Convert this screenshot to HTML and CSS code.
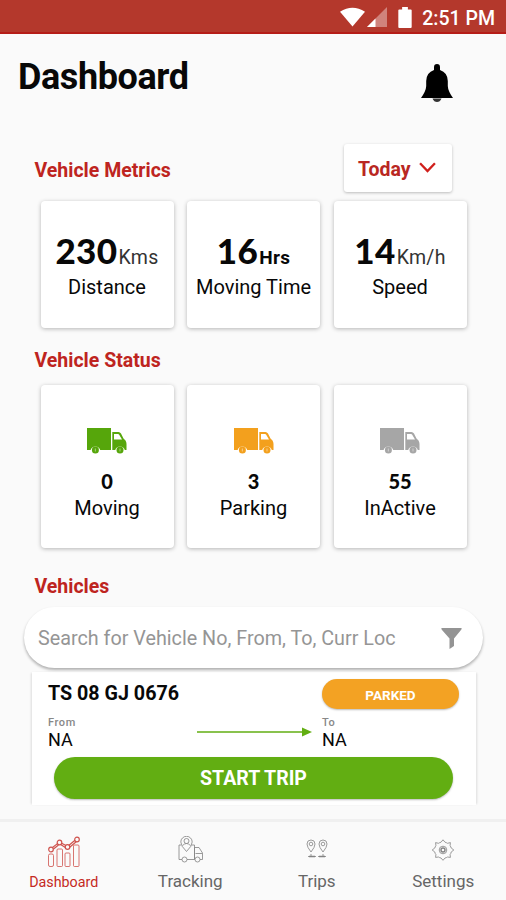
FILE: index.html
```html
<!DOCTYPE html>
<html lang="en">
<head>
<meta charset="utf-8">
<title>Dashboard</title>
<link rel="stylesheet" href="styles.css">
</head>
<body>
<svg class="defs" aria-hidden="true">
  <symbol id="truck" viewBox="0 0 40 26">
    <path fill="currentColor" d="M0 0H24V22H13.200A5 5 0 0 0 3.600 22H0Z"/>
    <path fill="currentColor" fill-rule="evenodd" d="M25.300 4H31.500Q33 4 34 5.500L36.500 10.500L38.500 12.500Q39.500 14 39.500 16V22H37.800A5 5 0 0 0 28.200 22H25.300ZM27 6V11.500H35L32.200 6.700Q31.800 6 31 6Z"/>
    <circle cx="8.400" cy="22" r="3.500" fill="currentColor"/><circle cx="33" cy="22" r="3.500" fill="currentColor"/>
    <path stroke="#fff" stroke-opacity=".4" stroke-width="1.200" d="M8.400 20.500V23.500M33 20.500V23.500"/>
  </symbol>
</svg>
<div class="statusbar">
  <svg class="wifi" viewBox="0 0 26 20"><path fill="#fff" d="M0 4.500Q13-4 26 4.500L13 20Z"/></svg>
  <svg class="signal" viewBox="0 0 20 20"><path fill="#fff" fill-opacity=".38" d="M20 0V20H0Z"/><path fill="#fff" d="M8.500 11.500V20H0Z"/></svg>
  <svg class="battery" viewBox="0 0 14 22"><path fill="#fff" d="M4 0H10V2.500H13Q14 2.500 14 3.500V21Q14 22 13 22H1Q0 22 0 21V3.500Q0 2.500 1 2.500H4Z"/></svg>
  <span class="clock">2:51 PM</span>
</div>
<header class="header">
  <h1>Dashboard</h1>
  <svg class="bell" viewBox="0 0 32 38"><path d="M13 3.200Q13 0 16 0T19 3.200V6Q26.600 8.500 26.800 17V22Q27 27 32 34H0Q5 27 5.200 22V17Q5.400 8.500 13 6Z"/><path fill="#333" d="M11.500 34.500H20.500Q19 38 16 38T11.500 34.500Z"/></svg>
</header>
<main>
  <section class="metrics">
    <div class="section-head">
      <h2>Vehicle Metrics</h2>
      <button class="period"><span>Today</span><svg viewBox="0 0 16 10"><path fill="none" stroke="#d0201c" stroke-width="2.200" d="M1 1L8 8.300L15 1"/></svg></button>
    </div>
    <div class="cards">
      <div class="card metric"><div class="value"><b>230</b><span>Kms</span></div><div class="label">Distance</div></div>
      <div class="card metric"><div class="value"><b>16</b><span class="strong">Hrs</span></div><div class="label">Moving Time</div></div>
      <div class="card metric"><div class="value"><b>14</b><span>Km/h</span></div><div class="label">Speed</div></div>
    </div>
  </section>
  <section class="status">
    <h2>Vehicle Status</h2>
    <div class="cards">
      <div class="card state"><svg class="truck green"><use href="#truck"/></svg><b>0</b><div class="label">Moving</div></div>
      <div class="card state"><svg class="truck orange"><use href="#truck"/></svg><b>3</b><div class="label">Parking</div></div>
      <div class="card state"><svg class="truck gray"><use href="#truck"/></svg><b>55</b><div class="label">InActive</div></div>
    </div>
  </section>
  <section class="vehicles">
    <h2>Vehicles</h2>
    <div class="search"><span>Search for Vehicle No, From, To, Curr Loc</span><svg viewBox="0 0 21 21"><path fill="#949494" d="M.500 0H20.500Q21 1 20 2L13 10.500V18L8.500 21V10.500L1 2Q0 1 .500 0Z"/></svg></div>
    <article class="vehicle">
      <div class="vehicle-top"><h3>TS 08 GJ 0676</h3><span class="badge">PARKED</span></div>
      <div class="route">
        <div class="place from"><small>From</small><span>NA</span></div>
        <svg class="arrow" viewBox="0 0 115 10"><path stroke="#62ae12" stroke-width="1.700" d="M0 5H108"/><path fill="#62ae12" d="M105 .500L115 5L105 9.500Z"/></svg>
        <div class="place"><small>To</small><span>NA</span></div>
      </div>
      <button class="start">START TRIP</button>
    </article>
  </section>
</main>
<nav class="nav">
  <a class="active"><svg viewBox="0 0 34 32" fill="none" stroke="currentColor"><rect x="1.500" y="18" width="5" height="12.500" rx="1.500"/><rect x="10" y="13" width="5.500" height="17.500" rx="1"/><rect x="18" y="17" width="5" height="13.500" rx="1"/><rect x="26.500" y="9" width="5.500" height="21.500" rx="1"/><g stroke-width="1.200"><circle cx="4" cy="13.500" r="2.300"/><circle cx="12.500" cy="6.500" r="2.300"/><circle cx="20.500" cy="11" r="2.300"/><circle cx="30" cy="3.500" r="2.300"/><path d="M5.500 11.500L10.500 7.600M6.500 13L11.500 9M14.700 7.200L18.500 9.300M14 8.700L18.400 11.500M22 9.300L28 4.300M22.700 11.200L29.200 5.800"/></g></svg><span>Dashboard</span></a>
  <a><svg viewBox="0 0 34 32" fill="none" stroke="currentColor"><path d="M8 9H6V23.500H9M14 23.500H21.500V11.500H26L29.500 17V23.500H27M21.500 9V23.500M22.500 17.500H29M18.500 9H21.500"/><circle cx="11.500" cy="23.500" r="2.500"/><circle cx="24.500" cy="23.500" r="2.500"/><path d="M13.500 15.500Q7.800 10 7.800 6A5.700 5.700 0 0 1 19.200 6Q19.200 10 13.500 15.500Z"/><circle cx="13.500" cy="5" r="2.500"/><path d="M9.500 9.500Q13.500 5.500 17.500 9.500"/></svg><span>Tracking</span></a>
  <a><svg viewBox="0 0 34 32" fill="none" stroke="currentColor"><path d="M11 16Q7 11 7 8A4 4 0 0 1 15 8Q15 11 11 16ZM23 16Q19 11 19 8A4 4 0 0 1 27 8Q27 11 23 16Z"/><circle cx="11" cy="8" r="1.800"/><circle cx="23" cy="8" r="1.800"/><path stroke-width="1.500" d="M9 20.500H15M19 20.500H25"/><path d="M11 18V21M23 18V21M8 20.500H26" stroke-dasharray="3 2"/></svg><span>Trips</span></a>
  <a><svg viewBox="0 0 34 32" fill="none" stroke="currentColor"><path d="M15 6.200L17 3.800L19 6.200Q20.500 6.600 21.500 7.300L24.400 6.600L24.100 9.700Q25 11 25.200 12L27.800 14L25.200 16Q25 17.500 24.100 18.500L24.400 21.400L21.500 21Q20.500 21.700 19 22L17 24.300L15 22Q13.500 21.700 12.500 21L9.600 21.400L9.900 18.500Q9 17.500 8.800 16L6.200 14L8.800 12Q9 11 9.900 9.700L9.600 6.600L12.500 7.300Q13.500 6.600 15 6.200Z"/><circle cx="17" cy="14" r="3.800"/><circle cx="17" cy="14" r="2" stroke-width="1.400"/></svg><span>Settings</span></a>
</nav>
</body>
</html>
```
FILE: styles.css
```css
* { box-sizing: border-box; }
body { margin: 0; width: 506px; height: 900px; overflow: hidden; display: flex; flex-direction: column; background: #fafafa; color: #080808; font-family: Roboto, "Liberation Sans", sans-serif; }
h1, h2, h3 { margin: 0; font-weight: 700; }
svg { display: block; flex: none; }
button { border: 0; font-family: inherit; }
.defs { position: absolute; width: 0; height: 0; }
.statusbar { height: 34px; flex: none; background: #b4382c; border-bottom: 2px solid #b51d18; display: flex; align-items: center; justify-content: flex-end; padding: 2px 11px 0 0; color: #fff; }
.wifi { width: 25px; height: 20px; }
.signal { width: 20px; height: 20px; margin-left: 2px; }
.battery { width: 14px; height: 21px; margin: 0 10px 0 11px; }
.clock { font-size: 19.500px; font-weight: 500; line-height: 24px; margin-top: 4px; white-space: nowrap; }
.header { height: 110px; flex: none; display: flex; justify-content: space-between; padding: 21px 53px 0 18px; }
h1 { font-size: 36px; line-height: 44px; letter-spacing: -.4px; }
.bell { width: 32px; height: 38px; margin-top: 9px; }
main { height: 675px; flex: none; }
h2 { color: #be2420; font-size: 19.500px; line-height: 24px; }
.section-head { height: 48px; display: flex; align-items: center; justify-content: space-between; padding: 0 54px 0 34.500px; }
.section-head h2 { padding-top: 5px; }
.period { width: 108px; height: 48px; display: flex; align-items: center; gap: 8px; padding: 2px 15px 0 14px; background: #fff; border-radius: 3px; box-shadow: 0 1px 3px rgba(0,0,0,.25); color: #b92722; font-size: 19.500px; font-weight: 700; }
.period svg { width: 17px; height: 11px; margin-bottom: 3px; }
.cards { display: grid; grid-template-columns: repeat(3, 133px); gap: 13.500px; padding-left: 40.500px; }
.card { background: #fff; border-radius: 4px; box-shadow: 0 1px 4px rgba(0,0,0,.28); display: flex; flex-direction: column; align-items: center; }
.metrics .cards { margin-top: 9px; }
.metric { height: 127px; padding-top: 27px; }
.value { height: 46px; display: flex; align-items: baseline; white-space: nowrap; font-family: Lato, sans-serif; }
.value b { font-size: 35px; line-height: 44px; font-weight: 900; letter-spacing: .4px; }
.value span { font-family: Roboto, sans-serif; font-size: 19.500px; font-weight: 400; color: #333; letter-spacing: .3px; margin-left: 1px; }
.value .strong { font-weight: 700; color: inherit; letter-spacing: .3px; font-size: 19px; }
.label { font-size: 20px; line-height: 26px; white-space: nowrap; }
.status { margin-top: 21px; }
.status h2, .vehicles h2 { padding-left: 34.500px; }
.status .cards { margin-top: 12px; }
.state { height: 163px; padding-top: 43px; }
.truck { width: 40px; height: 26px; }
.state b { font-family: Lato, sans-serif; font-weight: 900; font-size: 20px; line-height: 26px; margin-top: 14px; }
.state .label { margin-top: 1px; }
.green { color: #56a60b; }
.orange { color: #f3a01d; }
.gray { color: #a6a6a6; }
.vehicles { margin-top: 27px; }
.search { position: relative; z-index: 1; width: 459px; height: 61px; margin: 8px 0 0 24px; border-radius: 31px; padding: 1px 21px 0 14px; display: flex; align-items: center; justify-content: space-between; background: #fff; box-shadow: 0 2px 3px rgba(0,0,0,.3); color: #959595; font-size: 19.750px; }
.search svg { width: 21px; height: 21px; margin-top: 1px; }
.vehicle { width: 444px; height: 133px; margin: 4px 0 0 32px; padding: 7px 17px 0 16px; background: #fff; box-shadow: -2px 0 2px -1px #ddd, 2px 0 2px -1px #ddd; }
.vehicle-top { display: flex; justify-content: space-between; }
h3 { font-size: 19.700px; line-height: 30px; font-weight: 700; }
.badge { width: 137px; height: 30px; border-radius: 15px; background: #f3a223; color: #fff; text-align: center; font-size: 13.500px; line-height: 32px; font-weight: 700; letter-spacing: 0; box-shadow: 0 1px 2px #bbb; }
.route { height: 48px; display: flex; padding-top: 8px; }
.place { display: flex; flex-direction: column; }
.from { width: 148.500px; }
.place small { font-size: 11px; line-height: 12px; font-weight: 500; color: #888; letter-spacing: .6px; }
.place span { font-size: 18px; line-height: 22px; }
.arrow { width: 115px; height: 10px; margin: 10px 10.500px 0 0; }
.start { display: block; width: 399px; height: 42px; margin-left: 6px; padding: 1px 0 0; border-radius: 21px; background: #62ae12; color: #fff; font-size: 19.500px; font-weight: 700; box-shadow: 0 1px 2px #bbb; }
.nav { height: 81px; flex: none; border-top: 3px solid #f0f0f0; display: grid; grid-template-columns: repeat(4, 1fr); padding-top: 14px; color: #666; }
.nav a { display: flex; flex-direction: column; align-items: center; font-size: 17px; line-height: 22px; padding-left: 1px; }
.nav svg { width: 34px; height: 32px; stroke-width: .8; opacity: .8; }
.nav .active { color: #c52a23; font-size: 14.300px; }
.nav span { margin-top: 2px; }
.nav .active span { margin-top: 3px; }
```
